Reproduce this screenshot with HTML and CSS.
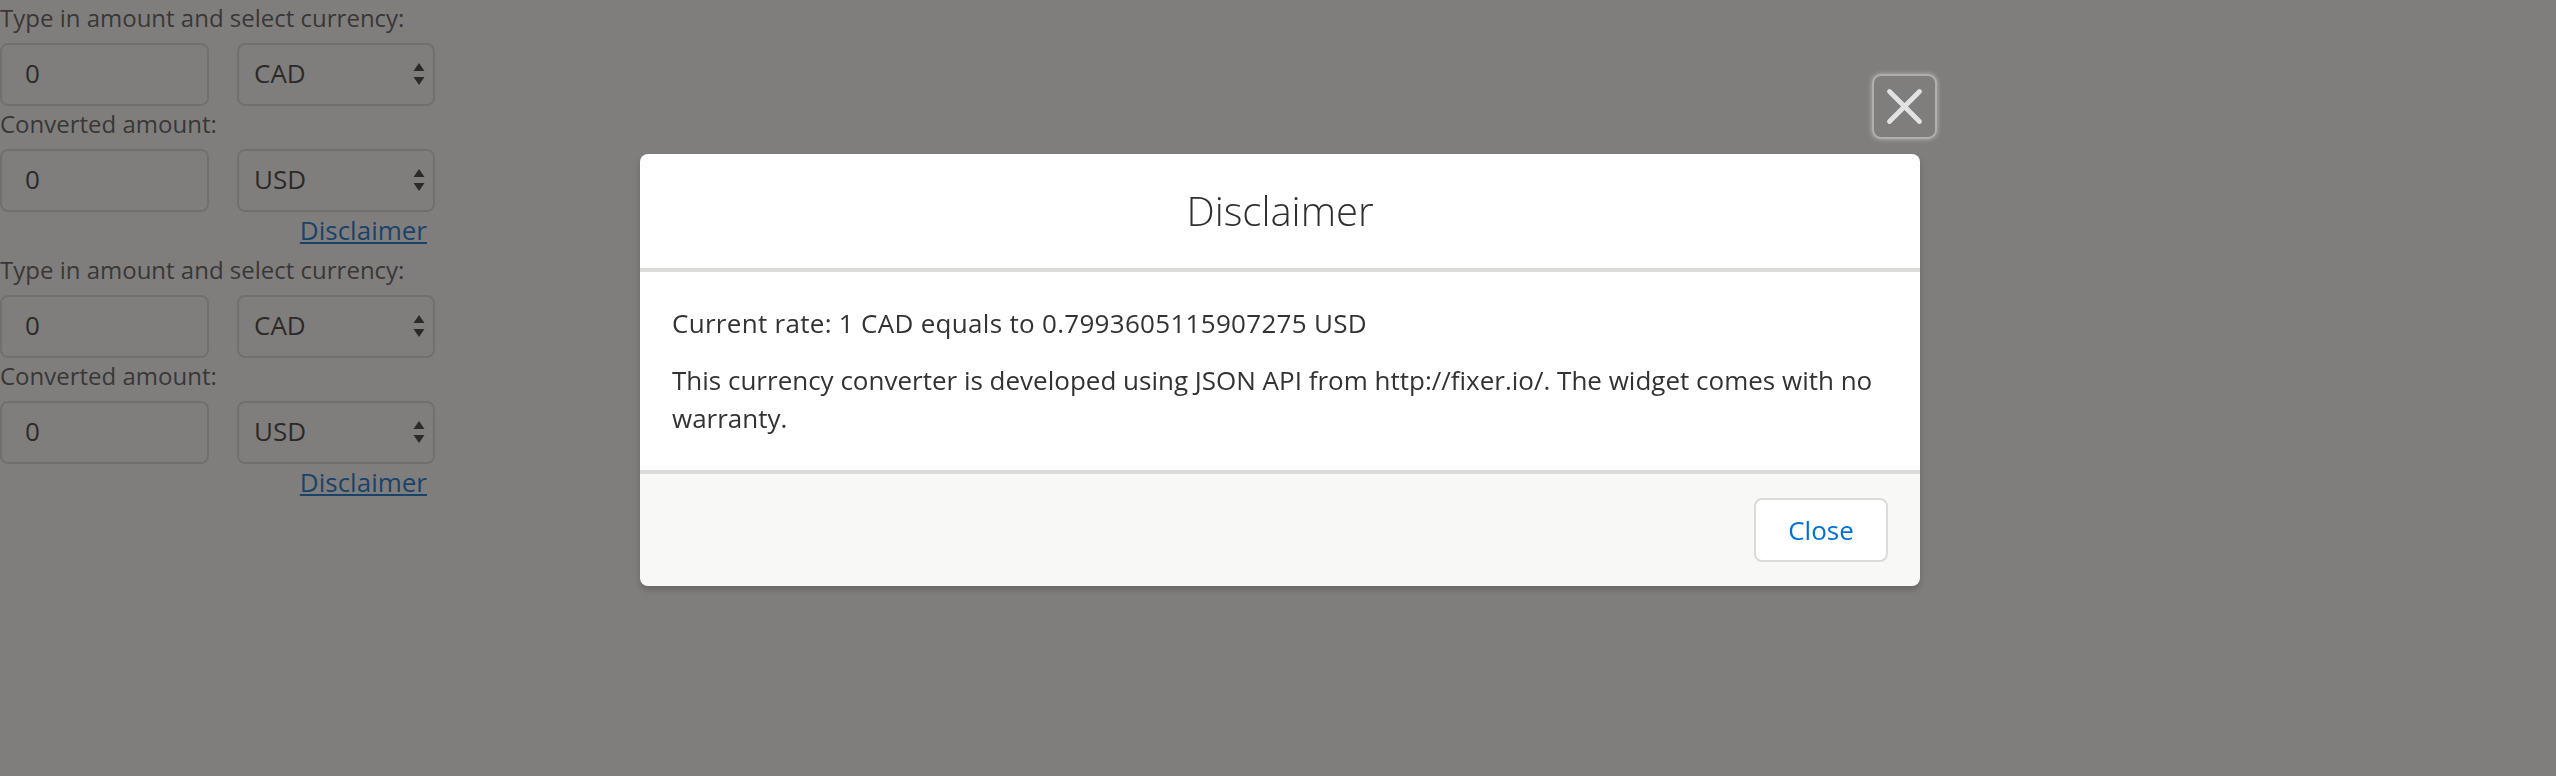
FILE: index.html
```html
<!DOCTYPE html>
<html lang="en">
<head>
<meta charset="utf-8">
<title>Currency converter</title>
<link rel="stylesheet" href="styles.css">
</head>
<body>
<main class="page">
  <div class="widget">
    <label class="lbl">Type in amount and select currency:</label>
    <div class="pair">
      <div class="field">0</div>
      <div class="select"><span>CAD</span>
        <svg class="arrows" width="12" height="24" viewBox="0 0 12 24"><path d="M6 0 L11.5 8 L0.5 8 Z M0.5 14 L11.5 14 L6 22 Z" fill="currentColor"/></svg>
      </div>
    </div>
    <label class="lbl">Converted amount:</label>
    <div class="pair">
      <div class="field">0</div>
      <div class="select"><span>USD</span>
        <svg class="arrows" width="12" height="24" viewBox="0 0 12 24"><path d="M6 0 L11.5 8 L0.5 8 Z M0.5 14 L11.5 14 L6 22 Z" fill="currentColor"/></svg>
      </div>
    </div>
    <div class="link-row"><a class="link" href="#">Disclaimer</a></div>
  </div>
  <div class="widget">
    <label class="lbl">Type in amount and select currency:</label>
    <div class="pair">
      <div class="field">0</div>
      <div class="select"><span>CAD</span>
        <svg class="arrows" width="12" height="24" viewBox="0 0 12 24"><path d="M6 0 L11.5 8 L0.5 8 Z M0.5 14 L11.5 14 L6 22 Z" fill="currentColor"/></svg>
      </div>
    </div>
    <label class="lbl">Converted amount:</label>
    <div class="pair">
      <div class="field">0</div>
      <div class="select"><span>USD</span>
        <svg class="arrows" width="12" height="24" viewBox="0 0 12 24"><path d="M6 0 L11.5 8 L0.5 8 Z M0.5 14 L11.5 14 L6 22 Z" fill="currentColor"/></svg>
      </div>
    </div>
    <div class="link-row"><a class="link" href="#">Disclaimer</a></div>
  </div>
</main>

<div class="backdrop"></div>

<div class="modal-layer">
  <section class="modal" role="dialog">
    <button class="modal-close" aria-label="Close">
      <svg width="65" height="65" viewBox="0 0 65 65"><path d="M17.5 17.5 L47.5 47.5 M47.5 17.5 L17.5 47.5" stroke="currentColor" stroke-width="4.8" stroke-linecap="round" fill="none"/></svg>
    </button>
    <header class="modal-header">
      <h2 class="modal-title">Disclaimer</h2>
    </header>
    <div class="modal-body">
      <p class="rate">Current rate: 1 CAD equals to 0.7993605115907275 USD</p>
      <p>This currency converter is developed using JSON API from http://fixer.io/. The widget comes with no warranty.</p>
    </div>
    <footer class="modal-footer">
      <button class="btn">Close</button>
    </footer>
  </section>
</div>
</body>
</html>
```
FILE: styles.css
```css
html, body {
  margin: 0;
  padding: 0;
  background: #ffffff;
}
body {
  font-family: "Open Sans", "Noto Sans", sans-serif;
  color: #333333;
  width: 2556px;
  height: 776px;
  overflow: hidden;
}

/* underlying page */
.page {
  display: flex;
  flex-direction: column;
}
.widget {
  width: 435px;
  display: flex;
  flex-direction: column;
  margin-bottom: 7px;
}
.lbl {
  display: block;
  font-size: 24px;
  line-height: 36px;
  color: #4f4f4f;
  margin-bottom: 7px;
  white-space: nowrap;
}
.pair {
  display: flex;
  gap: 28px;
}
.field, .select {
  box-sizing: border-box;
  height: 63px;
  padding-bottom: 3px;
  border: 2px solid #dddbda;
  border-radius: 8px;
  background: #ffffff;
  font-size: 26px;
  color: #2e2e2c;
  display: flex;
  align-items: center;
}
.field {
  width: 209px;
  padding-left: 23px;
}
.select {
  width: 198px;
  padding-left: 15px;
  padding-right: 8px;
  justify-content: space-between;
}
.arrows {
  color: #2e2e2e;
  display: block;
  margin-top: 4px;
}
.link-row {
  display: flex;
  justify-content: flex-end;
  padding-right: 8px;
  padding-top: 3px;
  height: 30px;
}
.link {
  font-size: 26px;
  line-height: 30px;
  color: #006dcc;
  text-decoration: underline;
}

/* overlay */
.backdrop {
  position: fixed;
  inset: 0;
  background: rgba(43, 40, 38, 0.6);
}
.modal-layer {
  position: fixed;
  inset: 0;
  display: flex;
  justify-content: center;
  align-items: flex-start;
  padding-top: 154px;
}
.modal {
  position: relative;
  width: 1280px;
  margin-left: 4px;
  border-radius: 8px;
  box-shadow: 0 4px 6px rgba(0, 0, 0, 0.18);
  display: flex;
  flex-direction: column;
}
.modal-close {
  position: absolute;
  top: -80px;
  right: -17px;
  width: 65px;
  height: 65px;
  padding: 0;
  box-sizing: border-box;
  background: transparent;
  border: 2px solid rgba(235, 235, 235, 0.45);
  border-radius: 9px;
  box-shadow: 0 0 5px rgba(255, 255, 255, 0.45);
  color: #e2e2e2;
  display: flex;
  align-items: center;
  justify-content: center;
}
.modal-close svg {
  display: block;
  flex: none;
}
.modal-header {
  background: #ffffff;
  border-radius: 8px 8px 0 0;
  border-bottom: 4px solid #dddbda;
  padding: 32px;
  text-align: center;
}
.modal-title {
  margin: 0;
  font-size: 40px;
  line-height: 50px;
  font-weight: 300;
  color: #2f2f2f;
}
.modal-body {
  background: #ffffff;
  padding: 32px 12px 33px 32px;
  font-size: 26px;
  line-height: 38px;
  color: #333333;
}
.modal-body p {
  margin: 0 0 19px;
}
.modal-body p:last-child {
  margin-bottom: 0;
}
.modal-body .rate {
  letter-spacing: 0.3px;
}
.modal-footer {
  background: #f8f8f7;
  border-top: 4px solid #dddbda;
  border-radius: 0 0 8px 8px;
  padding: 24px 32px;
  display: flex;
  justify-content: flex-end;
}
.btn {
  box-sizing: border-box;
  height: 64px;
  padding: 0 32px;
  min-width: 134px;
  background: #ffffff;
  border: 2px solid #dddbda;
  border-radius: 8px;
  font-family: "Open Sans", "Noto Sans", sans-serif;
  font-size: 26px;
  line-height: 60px;
  color: #0070d2;
}
```
